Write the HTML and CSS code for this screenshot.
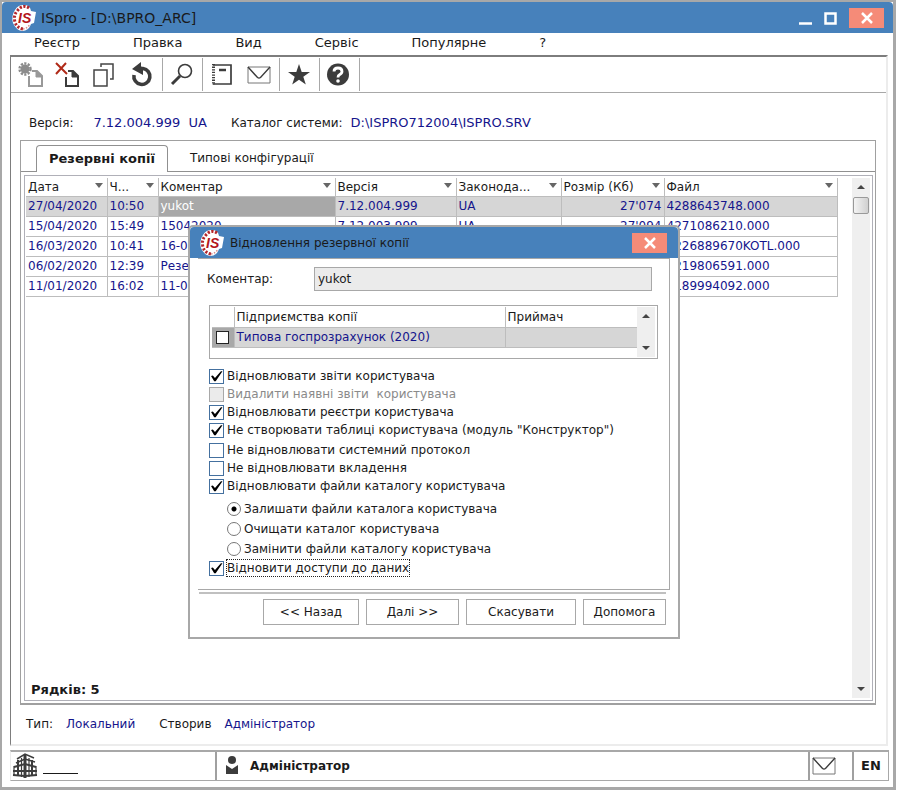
FILE: index.html
```
<!DOCTYPE html>
<html lang="uk">
<head>
  <meta charset="UTF-8">
  <meta name="viewport" content="width=device-width, initial-scale=1.0">
  <title>ISpro - [D:\BPRO_ARC]</title>
  <link rel="stylesheet" href="styles.css">
</head>
<body>
  <svg width="0" height="0" class="defs">
    <symbol id="logo" viewBox="0 0 26 28">
      <path d="M12 1Q19 0 20 7L25 8L23 19L20 20Q18 27 11 27Q5 26 2 19Q0 12 4 6Q7 1 12 1Z" fill="#fff"/>
      <path d="M18 4Q12 0 7 6Q2 11 4 18Q6 24 12 25" fill="none" stroke="#b3262b" stroke-width="3" stroke-dasharray="2.200 1.600"/>
      <path d="M12 25Q17 24 19 20" fill="none" stroke="#d98f8f" stroke-width="1.500" stroke-dasharray="1.500 1.500"/>
      <text x="7" y="19" class="logo-text">IS</text>
    </symbol>
    <symbol id="mail" viewBox="0 0 24 18">
      <path d="M1 1H23V17H1Z" fill="none" stroke="#777"/>
      <path d="M1 1L10.500 11.500Q12 12.500 13.500 11.500L23 1" fill="none" stroke="#3c3c3c" stroke-width="1.400"/>
    </symbol>
  </svg>

  <div class="window">
    <header class="titlebar">
      <svg class="logo"><use href="#logo"/></svg>
      <h1>ISpro - [D:\BPRO_ARC]</h1>
      <button class="win-btn" aria-label="Згорнути"><svg width="13" height="14"><path d="M0 12.500H13" stroke="#fff" stroke-width="2.500"/></svg></button>
      <button class="win-btn" aria-label="Розгорнути"><svg width="13" height="14"><path d="M1.500 2.500H11.500V12.500H1.500Z" fill="none" stroke="#fff" stroke-width="2.500"/></svg></button>
      <button class="close" aria-label="Закрити"><svg width="14" height="14"><path d="M2 2L12 12M12 2L2 12" stroke="#fff" stroke-width="2.500"/></svg></button>
    </header>

    <nav class="menu">
      <a href="#">Реєстр</a>
      <a href="#">Правка</a>
      <a href="#">Вид</a>
      <a href="#">Сервіс</a>
      <a href="#">Популярне</a>
      <a href="#">?</a>
    </nav>

    <main class="workspace">
      <div class="toolbar">
        <div class="tool-group">
          <button aria-label="Створити"><svg width="28" height="26" viewBox="0 0 28 26">
            <circle cx="8" cy="7" r="4.500" fill="#8c8c8c"/><circle cx="8" cy="7" r="5.500" fill="none" stroke="#8c8c8c" stroke-width="2.400" stroke-dasharray="2.200 1.300"/>
            <path d="M12 14V24H25V14L20 9H15" fill="none" stroke="#999" stroke-width="2"/><path d="M19 9V15H25Z" fill="#999" stroke="#999"/></svg></button>
          <button aria-label="Видалити"><svg width="28" height="26" viewBox="0 0 28 26">
            <path d="M2 1L13 12M12 1L2 12" stroke="#b02a18" stroke-width="2"/>
            <path d="M12 15V24H24V14L19 9H14" fill="none" stroke="#3c3c3c" stroke-width="2"/><path d="M18 9V15H24Z" fill="#3c3c3c" stroke="#3c3c3c"/></svg></button>
          <button aria-label="Копіювати"><svg width="28" height="26" viewBox="0 0 28 26" fill="none" stroke="#444" stroke-width="1.500">
            <path d="M3 8H16V24H3Z"/><path d="M10 5V2H22V17H19"/></svg></button>
          <button aria-label="Оновити"><svg width="28" height="26" viewBox="0 0 28 26">
            <path d="M10 6.500H15A8 8 0 1 1 6 13" fill="none" stroke="#3c3c3c" stroke-width="3.600"/><path d="M4 7L13 0V4L15 8V13Z" fill="#3c3c3c"/></svg></button>
        </div>
        <div class="tool-group">
          <button aria-label="Пошук"><svg width="28" height="26" viewBox="0 0 28 26" fill="none" stroke="#3c3c3c">
            <circle cx="17" cy="9" r="6.500" stroke-width="1.600"/><path d="M12 14L4 22" stroke-width="3"/></svg></button>
        </div>
        <div class="tool-group">
          <button aria-label="Журнал"><svg width="28" height="26" viewBox="0 0 28 26" fill="none" stroke="#3c3c3c">
            <path d="M5 3H23V22H5" stroke-width="1.700"/><path d="M5.500 2V23" stroke-width="3" stroke-dasharray="1.300 1.300"/><path d="M11 8H18" stroke-width="2.500"/></svg></button>
          <button aria-label="Пошта"><svg width="24" height="18"><use href="#mail"/></svg></button>
        </div>
        <div class="tool-group">
          <button aria-label="Обране"><svg width="28" height="26" viewBox="0 0 28 26"><path d="M14 2L16.700 10H25L18.300 14.800L20.800 22.500L14 17.700L7.200 22.500L9.700 14.800L3 10H11.300Z" fill="#3c3c3c"/></svg></button>
        </div>
        <div class="tool-group">
          <button aria-label="Довідка"><svg width="28" height="26" viewBox="0 0 28 26"><circle cx="13" cy="12.500" r="11" fill="#3c3c3c"/><path d="M9 9.500Q9 6 13 6T17 9.500Q17 11.500 14.500 12.700Q13 13.500 13 15.500" fill="none" stroke="#fff" stroke-width="2.800"/><circle cx="13" cy="19" r="1.800" fill="#fff"/></svg></button>
        </div>
      </div>

      <dl class="info">
        <dt>Версія:</dt><dd>7.12.004.999&nbsp; UA</dd>
        <dt>Каталог системи:</dt><dd>D:\ISPRO712004\ISPRO.SRV</dd>
      </dl>

      <section class="panel">
        <div class="tabs">
          <button class="tab active">Резервні копії</button>
          <button class="tab">Типові конфігурації</button>
        </div>
        <div class="grid-frame">
          <div class="grid-content">
            <table class="grid">
              <colgroup><col class="c-date"><col class="c-time"><col class="c-comment"><col class="c-version"><col class="c-law"><col class="c-size"><col class="c-file"></colgroup>
              <thead>
                <tr><th>Дата</th><th>Ч...</th><th>Коментар</th><th>Версія</th><th>Законода...</th><th>Розмір (Кб)</th><th>Файл</th></tr>
              </thead>
              <tbody>
                <tr class="selected"><td>27/04/2020</td><td>10:50</td><td class="current">yukot</td><td>7.12.004.999</td><td>UA</td><td class="num">27'074</td><td>4288643748.000</td></tr>
                <tr><td>15/04/2020</td><td>15:49</td><td>15042020</td><td>7.12.003.999</td><td>UA</td><td class="num">27'094</td><td>4271086210.000</td></tr>
                <tr><td>16/03/2020</td><td>10:41</td><td>16-0</td><td></td><td></td><td></td><td>4226889670KOTL.000</td></tr>
                <tr><td>06/02/2020</td><td>12:39</td><td>Резе</td><td></td><td></td><td></td><td>4219806591.000</td></tr>
                <tr><td>11/01/2020</td><td>16:02</td><td>11-0</td><td></td><td></td><td></td><td>4189994092.000</td></tr>
              </tbody>
            </table>
            <p class="count">Рядків: 5</p>
          </div>
          <div class="scrollbar"><span class="up"></span><span class="thumb"></span><span class="down"></span></div>
        </div>
      </section>

      <dl class="meta">
        <dt>Тип:</dt><dd>Локальний</dd>
        <dt>Створив</dt><dd>Адміністратор</dd>
      </dl>
    </main>

    <footer class="status">
      <div class="company">
        <svg width="26" height="26" viewBox="0 0 26 26" fill="none" stroke="#3c3c3c">
          <path d="M13 2V25" stroke-width="3"/>
          <path d="M6 7V23M20 7V23" stroke-width="2"/>
          <path d="M5 6L13 1L22 5M4 10L13 6L23 9" stroke-width="1.500"/>
          <path d="M2 14L13 11L24 14M1 18H25M1 22L13 23L25 22" stroke-width="2"/>
          <path d="M2 13V23M24 13V23M9.500 5V24M17 5V24" stroke-width="1.200"/>
        </svg>
        <span class="blank"></span>
      </div>
      <div class="user">
        <svg width="16" height="20"><circle cx="8" cy="4" r="4" fill="#3c3c3c"/><path d="M2 9L8 13L14 9V18H2Z" fill="#3c3c3c"/></svg>
        <b>Адміністратор</b>
      </div>
      <div class="inbox"><svg width="24" height="18"><use href="#mail"/></svg></div>
      <div class="lang">EN</div>
    </footer>

    <form class="dialog" role="dialog" aria-labelledby="dlgTitle">
      <div class="dialog-title">
        <svg class="logo"><use href="#logo"/></svg>
        <h2 id="dlgTitle">Відновлення резервної копії</h2>
        <button type="button" class="close" aria-label="Закрити"><svg width="14" height="14"><path d="M2 2L12 12M12 2L2 12" stroke="#fff" stroke-width="2.500"/></svg></button>
      </div>
      <div class="dialog-body">
        <div class="field">
          <label for="comment">Коментар:</label>
          <input type="text" id="comment" value="yukot" readonly>
        </div>
        <div class="firms">
          <table>
            <colgroup><col class="c-mark"><col class="c-firm"><col></colgroup>
            <thead><tr><th></th><th>Підприємства копії</th><th>Приймач</th></tr></thead>
            <tbody><tr><td class="mark"><input type="checkbox" aria-label="Типова госпрозрахунок (2020)"></td><td>Типова госпрозрахунок (2020)</td><td></td></tr></tbody>
          </table>
          <div class="scrollbar"><span class="up"></span><span class="down"></span></div>
        </div>
        <div class="options">
          <label><input type="checkbox" checked><span>Відновлювати звіти користувача</span></label>
          <label class="disabled"><input type="checkbox" disabled><span>Видалити наявні звіти&nbsp; користувача</span></label>
          <label><input type="checkbox" checked><span>Відновлювати реєстри користувача</span></label>
          <label><input type="checkbox" checked><span>Не створювати таблиці користувача (модуль "Конструктор")</span></label>
        </div>
        <div class="options">
          <label><input type="checkbox"><span>Не відновлювати системний протокол</span></label>
          <label><input type="checkbox"><span>Не відновлювати вкладення</span></label>
          <label><input type="checkbox" checked><span>Відновлювати файли каталогу користувача</span></label>
        </div>
        <div class="choices">
          <label><input type="radio" name="files" checked><span>Залишати файли каталога користувача</span></label>
          <label><input type="radio" name="files"><span>Очищати каталог користувача</span></label>
          <label><input type="radio" name="files"><span>Замінити файли каталогу користувача</span></label>
        </div>
        <div class="options">
          <label><input type="checkbox" checked><span class="focused">Відновити доступи до даних</span></label>
        </div>
      </div>
      <div class="dialog-buttons">
        <button type="button" class="back">&lt;&lt; Назад</button>
        <button type="button" class="next">Далі &gt;&gt;</button>
        <button type="button" class="cancel">Скасувати</button>
        <button type="button" class="help">Допомога</button>
      </div>
    </form>
  </div>
</body>
</html>
```
FILE: styles.css
```
* {
  box-sizing: border-box;
}
body {
  margin: 0;
  padding: 0 6px 4px 0;
  height: 100vh;
  background: #fff;
  color: #1a1a1a;
  font-family: 'DejaVu Sans', Verdana, sans-serif;
  font-size: 12px;
  line-height: 16px;
}
button, input {
  font: inherit;
  color: inherit;
}
button {
  padding: 0;
  border: none;
  background: none;
}
svg {
  display: block;
  flex: none;
}
.defs {
  position: absolute;
}
h1, h2, p, dl, dd {
  margin: 0;
  font-size: 12px;
  font-weight: normal;
}

/* main window */
.window {
  position: relative;
  display: flex;
  flex-direction: column;
  height: 100%;
  min-height: 660px;
  border: 2px solid #a8a8a8;
  border-right-width: 3px;
  border-bottom-width: 3px;
  background: #fff;
}
.titlebar {
  display: flex;
  align-items: center;
  height: 31px;
  padding: 0 9px;
  background: #4781bb;
  border-radius: 4px 4px 0 0;
}
.titlebar h1 {
  flex: 1;
  margin-left: 4px;
  font-size: 14px;
}
.logo {
  width: 26px;
  height: 28px;
}
.logo-text {
  font: italic bold 14px 'Liberation Sans', sans-serif;
  fill: #b3161c;
}
.win-btn {
  margin-right: 12px;
}
.close {
  display: flex;
  justify-content: center;
  align-items: center;
  width: 35px;
  height: 20px;
  background: #f58b78;
}
.menu {
  display: flex;
  gap: 53px;
  height: 22px;
  padding: 1px 32px 0;
}
.menu a {
  color: #1a1a1a;
  font-size: 13px;
  line-height: 18px;
  text-decoration: none;
}
.workspace {
  flex: 1;
  display: flex;
  flex-direction: column;
  margin: 0 5px 0 8px;
  border: 2px solid #ececec;
  border-top-color: #7d7d7d;
  border-left: 1px solid #7d7d7d;
}

/* toolbar */
.toolbar {
  display: flex;
  height: 36px;
  padding: 1px;
  border-bottom: 1px solid #a8a8a8;
}
.tool-group {
  display: flex;
  align-items: center;
  gap: 9px;
  padding: 0 6px 0 5px;
  border-right: 1px solid #a8a8a8;
}
.tool-group button {
  display: flex;
  justify-content: center;
  width: 28px;
}

.info, .meta {
  display: flex;
}
.info {
  padding: 22px 18px 9px;
}
.info dd, .meta dd {
  color: #15158c;
}
.info dd {
  margin: 0 24px 0 20px;
  font-size: 13px;
}
.info dd:last-child {
  margin: 0 0 0 8px;
}
.meta {
  padding: 11px 15px 12px;
}
.meta dd {
  margin: 0 24px 0 13px;
}

/* tabs and table */
.panel {
  flex: 1;
  display: flex;
  flex-direction: column;
  margin: 0 10px 0 9px;
  border: 1px solid #a0a0a0;
  border-bottom-width: 2px;
}
.tabs {
  display: flex;
  height: 31px;
  padding: 4px 0 0 15px;
  border-bottom: 1px solid #909090;
}
.tab {
  padding: 0 22px;
}
.tab.active {
  height: 27px;
  padding: 0 12px;
  border: 1px solid #909090;
  border-bottom: none;
  border-radius: 4px 4px 0 0;
  background: #fff;
  font-size: 13px;
  font-weight: bold;
}
.grid-frame {
  flex: 1;
  display: flex;
  margin: 3px 2px 2px 3px;
  padding: 2px 2px 2px 1px;
  border: 1px solid #b0b0b8;
}
.grid-content {
  flex: 1;
  display: flex;
  flex-direction: column;
  justify-content: space-between;
}
table {
  border-collapse: collapse;
  table-layout: fixed;
}
th, td {
  height: 20px;
  padding: 0 2px;
  border-right: 1px solid #bdbdbd;
  border-bottom: 1px solid #bdbdbd;
  line-height: 16px;
  text-align: left;
  white-space: nowrap;
}
th {
  position: relative;
  font-weight: normal;
}
td {
  color: #15158c;
}
.grid {
  width: 812px;
}
.grid th {
  height: 18px;
}
.grid th::after {
  content: '';
  position: absolute;
  right: 4px;
  top: 5px;
  border: 4px solid transparent;
  border-top: 5px solid #666;
  border-bottom: none;
}
.c-date {
  width: 81px;
}
.c-time {
  width: 51px;
}
.c-comment {
  width: 177px;
}
.c-version {
  width: 121px;
}
.c-law {
  width: 105px;
}
.c-size {
  width: 103px;
}
.selected td {
  background: #d6d6d6;
}
.selected .current {
  background: #a8a8a8;
  color: #fff;
}
.num {
  text-align: right;
}
.count {
  padding: 0 5px;
  font-size: 13px;
  font-weight: bold;
}
.scrollbar {
  display: flex;
  flex-direction: column;
  align-items: center;
  width: 18px;
  padding: 7px 0;
  background: #efefef;
}
.up, .down {
  border: 4px solid transparent;
}
.up {
  border-top: none;
  border-bottom-color: #444;
}
.down {
  margin-top: auto;
  border-bottom: none;
  border-top-color: #444;
}
.thumb {
  width: 16px;
  height: 17px;
  margin-top: 8px;
  border: 1px solid #999;
  border-radius: 2px;
  background: linear-gradient(to right, #f4f4f4, #d0d0d0);
}

/* status bar */
.status {
  display: flex;
  height: 31px;
  margin: 4px 4px 6px 8px;
  border: 1px solid #a8a8a8;
  border-left-color: #ececec;
  border-top-width: 2px;
}
.status > div {
  display: flex;
  align-items: center;
}
.company {
  width: 206px;
  padding-left: 1px;
  border-right: 2px solid #a0a0a0;
}
.blank {
  width: 35px;
  height: 16px;
  margin-left: 5px;
  border-bottom: 1px solid #1a1a1a;
}
.user {
  flex: 1;
  gap: 10px;
  padding-left: 7px;
}
.inbox {
  width: 46px;
  padding-left: 2px;
  border: 2px solid #a0a0a0;
  border-width: 0 2px;
}
.lang {
  justify-content: center;
  width: 34px;
  font-size: 13px;
  font-weight: bold;
}

/* restore dialog */
.dialog {
  position: absolute;
  left: 186px;
  top: 223px;
  width: 492px;
  border: 2px solid #a8a8a8;
  border-radius: 5px 5px 0 0;
  background: #fff;
}
.dialog-title {
  display: flex;
  align-items: center;
  height: 31px;
  padding: 0 11px 0 9px;
  background: #4781bb;
  border-radius: 4px 4px 0 0;
}
.dialog-title h2 {
  flex: 1;
  margin-left: 5px;
}
.dialog-body {
  height: 332px;
  margin: 0 8px;
  padding: 8px 11px 0 9px;
  border: 1px solid #a8a8a8;
  border-left: none;
}
.field {
  display: flex;
  align-items: center;
  padding-right: 6px;
}
.field label {
  width: 107px;
}
.field input {
  flex: 1;
  height: 24px;
  padding: 0 3px;
  border: 1px solid #a8a8a8;
  background: #ebebeb;
  outline: none;
}
.firms {
  display: flex;
  height: 54px;
  margin: 14px 0 8px 2px;
  padding: 1px 2px;
  border: 1px solid #a8a8a8;
}
.firms table {
  flex: 1;
  height: 40px;
}
.firms td {
  background: #d6d6d6;
}
.firms th:last-child, .firms td:last-child {
  border-right: none;
}
.c-mark {
  width: 22px;
}
.c-firm {
  width: 271px;
}
.firms .mark {
  background: #a8a8a8;
}
.dialog input[type="checkbox"] {
  appearance: none;
  display: block;
  flex: none;
  width: 15px;
  height: 15px;
  margin: 0;
  border: 1px solid #44709f;
  background: #fff;
}
.dialog .mark input {
  width: 13px;
  height: 13px;
  margin: 0 auto;
  border-color: #222;
}
.dialog input[type="checkbox"]:checked::before {
  content: '';
  display: block;
  width: 13px;
  height: 13px;
  background: #000;
  clip-path: polygon(8% 50%, 22% 46%, 38% 66%, 84% 14%, 96% 14%, 44% 90%, 32% 90%);
}
.dialog input[type="checkbox"]:disabled {
  border-color: #a8a8a8;
  background: #ebebeb;
}
.options, .choices {
  padding-left: 2px;
}
.options + .options {
  margin-top: 2px;
}
.options label, .choices label {
  display: flex;
  align-items: center;
  gap: 3px;
  height: 18px;
}
.disabled {
  color: #8a8a8a;
}
.choices {
  margin-top: 4px;
  padding-left: 20px;
}
.choices label {
  height: 20px;
}
.choices input {
  appearance: none;
  flex: none;
  width: 14px;
  height: 14px;
  margin: 0;
  border: 1px solid #777;
  border-radius: 50%;
  background: #fff;
}
.choices input:checked {
  background: radial-gradient(circle, #000 2px, #fff 3px);
}
.focused {
  outline: 1px dotted #222;
}
.dialog-buttons {
  display: flex;
  justify-content: flex-end;
  gap: 7px;
  margin: 2px 12px 0 9px;
  padding: 5px 0 12px;
  border-top: 2px solid #c0c0c0;
}
.dialog-buttons button {
  height: 26px;
  border: 1px solid #a8a8a8;
  background: #fff;
}
.back {
  width: 96px;
}
.next {
  width: 93px;
}
.cancel {
  width: 110px;
}
.help {
  width: 83px;
}
```
